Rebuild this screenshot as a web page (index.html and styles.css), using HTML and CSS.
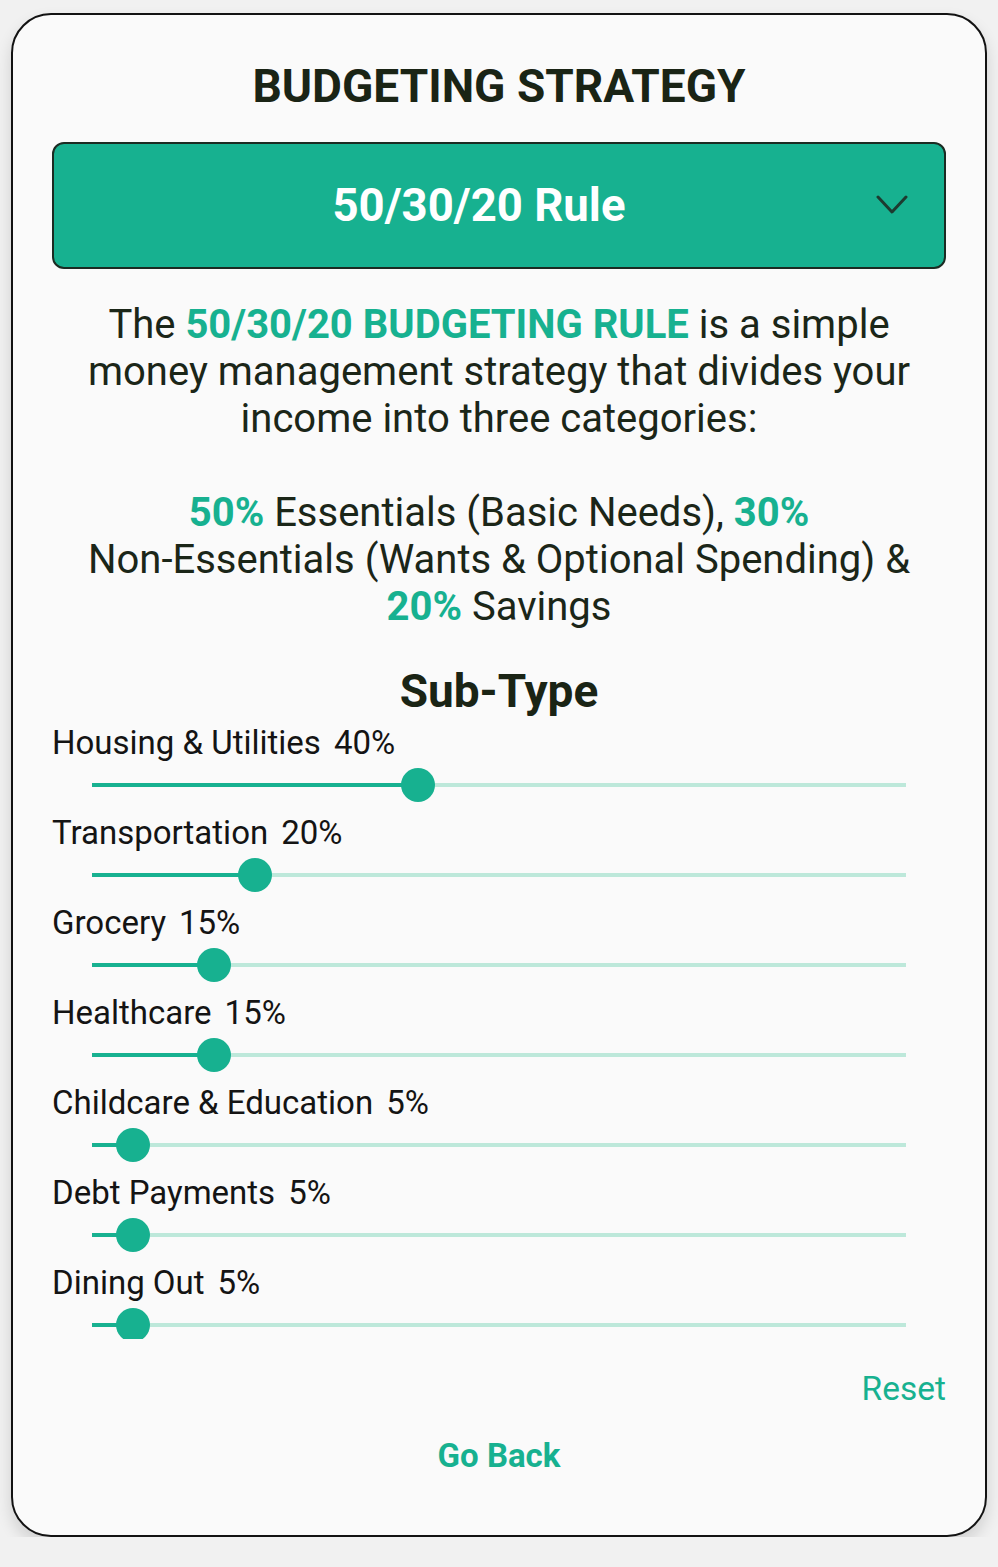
FILE: index.html
```html
<!DOCTYPE html>
<html>
<head>
<meta charset="utf-8">
<link rel="stylesheet" href="styles.css">
</head>
<body>
<div class="card">
  <h1 class="title">BUDGETING STRATEGY</h1>
  <div class="dropdown">
    <span class="dropdown-text">50/30/20 Rule</span>
    <svg class="chevron" width="32" height="22" viewBox="0 0 32 22"><path d="M2 3 L16 18 L30 3" fill="none" stroke="#1d3b30" stroke-width="3" stroke-linecap="round" stroke-linejoin="round"/></svg>
  </div>
  <p class="desc">The <b class="hl">50/30/20 BUDGETING RULE</b> is a simple money management strategy that divides your income into three categories:<br><br><b class="hl">50%</b> Essentials (Basic Needs), <b class="hl">30%</b> <span class="nowrap">Non-Essentials</span> (Wants &amp; Optional Spending) &amp; <b class="hl">20%</b> Savings</p>
  <h2 class="subtitle">Sub-Type</h2>
  <div class="list">
    <div class="row">
      <div class="label"><span>Housing &amp; Utilities</span><span>40%</span></div>
      <div class="slider"><div class="track"></div><div class="fill" style="width:40%"></div><div class="thumb" style="left:40%"></div></div>
    </div>
    <div class="row">
      <div class="label"><span>Transportation</span><span>20%</span></div>
      <div class="slider"><div class="track"></div><div class="fill" style="width:20%"></div><div class="thumb" style="left:20%"></div></div>
    </div>
    <div class="row">
      <div class="label"><span>Grocery</span><span>15%</span></div>
      <div class="slider"><div class="track"></div><div class="fill" style="width:15%"></div><div class="thumb" style="left:15%"></div></div>
    </div>
    <div class="row">
      <div class="label"><span>Healthcare</span><span>15%</span></div>
      <div class="slider"><div class="track"></div><div class="fill" style="width:15%"></div><div class="thumb" style="left:15%"></div></div>
    </div>
    <div class="row">
      <div class="label"><span>Childcare &amp; Education</span><span>5%</span></div>
      <div class="slider"><div class="track"></div><div class="fill" style="width:5%"></div><div class="thumb" style="left:5%"></div></div>
    </div>
    <div class="row">
      <div class="label"><span>Debt Payments</span><span>5%</span></div>
      <div class="slider"><div class="track"></div><div class="fill" style="width:5%"></div><div class="thumb" style="left:5%"></div></div>
    </div>
    <div class="row">
      <div class="label"><span>Dining Out</span><span>5%</span></div>
      <div class="slider"><div class="track"></div><div class="fill" style="width:5%"></div><div class="thumb" style="left:5%"></div></div>
    </div>
  </div>
  <div class="reset-row"><span class="reset">Reset</span></div>
  <div class="back-row"><span class="back">Go Back</span></div>
</div>
</body>
</html>
```

FILE: styles.css
```css
html, body {
  margin: 0;
  padding: 0;
}
body {
  background: #f1f1f1;
  font-family: Roboto, "Noto Sans", sans-serif;
  color: #1b2618;
}
.card {
  box-sizing: border-box;
  width: 976px;
  height: 1524px;
  margin: 13px 0 0 11px;
  border: 2px solid #121212;
  border-radius: 40px;
  background: #fafafa;
  box-shadow: 0 8px 16px rgba(0,0,0,0.14);
  padding: 43px 39px 0 39px;
  display: flex;
  flex-direction: column;
  overflow: hidden;
}
.title {
  margin: 0;
  height: 56px;
  line-height: 56px;
  text-align: center;
  font-size: 46px;
  font-weight: 700;
  color: #1a2415;
}
.dropdown {
  position: relative;
  margin-top: 28px;
  box-sizing: border-box;
  height: 127px;
  border: 2px solid #1b2b22;
  border-radius: 12px;
  background: #17b190;
  display: flex;
  align-items: center;
  padding-right: 40px;
}
.dropdown-text {
  flex: 1;
  text-align: center;
  color: #fff;
  font-weight: 700;
  font-size: 45.5px;
}
.chevron {
  position: absolute;
  right: 36px;
  top: 50px;
}
.desc {
  margin: 32px 0 0 0;
  padding: 0 20px;
  text-align: center;
  font-size: 40px;
  line-height: 47px;
}
.nowrap {
  white-space: nowrap;
}
.hl {
  color: #17b190;
  font-weight: 700;
}
.subtitle {
  margin: 36px 0 0 0;
  text-align: center;
  font-size: 46px;
  line-height: 50px;
  font-weight: 700;
  color: #1a2415;
}
.list {
  margin-top: 7px;
  height: 616px;
  overflow: hidden;
}
.row {
  height: 90px;
}
.label {
  display: flex;
  gap: 13px;
  height: 40px;
  line-height: 40px;
  font-size: 33px;
  color: #141414;
}
.slider {
  position: relative;
  height: 44px;
  margin: 0 40px 6px 40px;
}
.track {
  position: absolute;
  left: 0;
  right: 0;
  top: 20px;
  height: 4px;
  background: #bde8da;
}
.fill {
  position: absolute;
  left: 0;
  top: 20px;
  height: 4px;
  background: #17b190;
}
.thumb {
  position: absolute;
  top: 5px;
  width: 34px;
  height: 34px;
  margin-left: -17px;
  border-radius: 50%;
  background: #17b190;
}
.reset-row {
  display: flex;
  justify-content: flex-end;
  margin-top: 30px;
}
.reset {
  font-size: 33.5px;
  line-height: 40px;
  color: #17b190;
}
.back-row {
  display: flex;
  justify-content: center;
  margin-top: 27px;
}
.back {
  font-size: 33px;
  line-height: 40px;
  font-weight: 700;
  color: #17b190;
}
```
